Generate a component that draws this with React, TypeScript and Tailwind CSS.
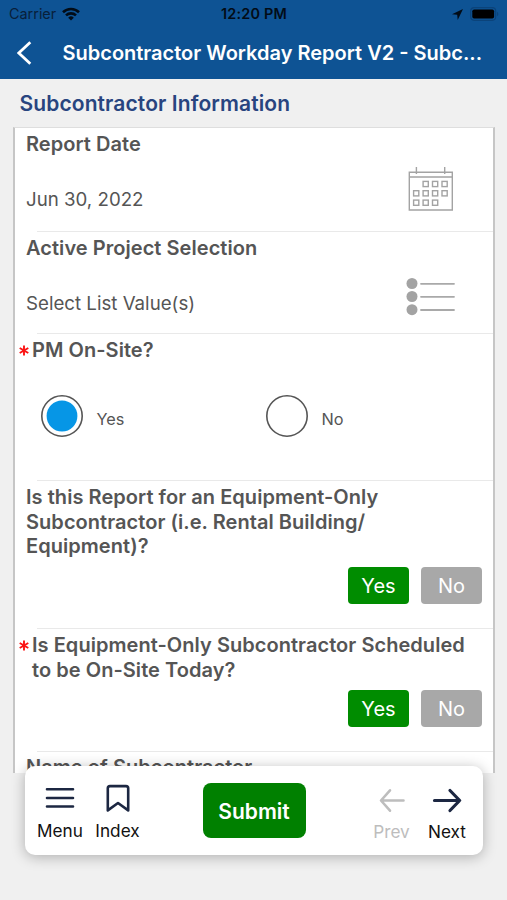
import { useState } from "react";
import type { ReactNode } from "react";

type FieldProps = {
  label: ReactNode;
  required?: boolean;
  className: string;
  children?: ReactNode;
};

function Field({ label, required, className, children }: FieldProps) {
  return (
    <div className={`flex flex-col ${className}`}>
      <div className={`flex ${required ? "pt-1 pl-1" : "pt-[4px] pl-[11px]"}`}>
        {required && <Asterisk />}
        <div className="text-[20px] leading-[24.5px] font-semibold tracking-[0.05px] whitespace-nowrap">{label}</div>
      </div>
      {children}
      <div className="mt-auto ml-[22px] h-px shrink-0 bg-[#e9e9e9]" />
    </div>
  );
}

function Asterisk() {
  return (
    <svg className="mt-[7px] mr-[3px] h-[11px] w-[10px] shrink-0" viewBox="0 0 10 11" fill="none" stroke="#fb1414" strokeWidth="1.9">
      <path d="M5 .5v10M.7 3l8.6 5M9.3 3l-8.6 5" />
    </svg>
  );
}

function YesNo() {
  const [value, setValue] = useState(true);

  return (
    <div className="flex justify-end gap-3 pr-[11px] text-[20px] leading-[38px] text-white">
      <button onClick={() => setValue(true)} className={`h-[37px] w-[61px] rounded ${value ? "bg-[#008c00]" : "bg-[#a8a8a8]"}`}>
        Yes
      </button>
      <button onClick={() => setValue(false)} className={`h-[37px] w-[61px] rounded ${value ? "bg-[#a8a8a8]" : "bg-[#008c00]"}`}>
        No
      </button>
    </div>
  );
}

function Radio({ label, checked, onClick }: { label: string; checked: boolean; onClick: () => void }) {
  return (
    <button onClick={onClick} className="flex w-[225px] items-center gap-[13.5px]">
      <svg className="size-[42px]" viewBox="0 0 42 42">
        <circle cx="21" cy="21" r="20.2" fill="none" stroke="#555" strokeWidth="1.6" />
        {checked && <circle cx="21" cy="21" r="15.4" fill="#0696e6" />}
      </svg>
      <span className="pt-[6px] text-[16.3px] leading-5">{label}</span>
    </button>
  );
}

const calendarCells = [
  [17.7, 18], [27.1, 18], [36.6, 18],
  [8.2, 27.3], [17.7, 27.3], [27.1, 27.3], [36.6, 27.3],
  [8.2, 36.7], [17.7, 36.7], [27.1, 36.7],
];

function CalendarIcon() {
  return (
    <svg className="size-[46px]" viewBox="0 0 46 46" fill="none" stroke="#a3a3a3" strokeWidth="1.4">
      <path d="M1.3 6.3h43v37.7h-43zM1.3 11h43M8.4 1v7M36.7 1v7" />
      {calendarCells.map(([x, y]) => (
        <rect key={`${x}-${y}`} x={x - 2.6} y={y - 2.6} width="5.2" height="5.2" />
      ))}
    </svg>
  );
}

function ListIcon() {
  return (
    <svg className="h-[38px] w-[49px]" viewBox="0 0 49 38">
      {[5.5, 18.5, 31.7].map((y) => (
        <g key={y}>
          <circle cx="6" cy={y} r="5.5" fill="#a3a3a3" />
          <path d={`M15 ${y + 0.3}h33`} stroke="#a9a9a9" strokeWidth="1.8" strokeLinecap="round" />
        </g>
      ))}
    </svg>
  );
}

function StatusBar() {
  return (
    <div className="grid h-7 grid-cols-3 items-center pr-2 pl-[9px] text-[#08203a]">
      <div className="flex items-center gap-[6px] text-[14.4px]">
        Carrier
        <svg className="h-[14px] w-[18px]" viewBox="0 0 18 14" fill="none" stroke="#020c17" strokeWidth="2.6">
          <path d="M1 5.2a11.6 11.6 0 0 1 16 0M4 8.4a7.3 7.3 0 0 1 10 0" />
          <path d="M9 13.5 6.2 10.7a4 4 0 0 1 5.6 0z" fill="#020c17" stroke="none" />
        </svg>
      </div>
      <div className="text-center text-[14.4px] font-semibold tracking-[0.2px] text-[#020c17]">12:20 PM</div>
      <div className="flex items-center justify-end gap-[7px]">
        <svg className="size-[11px]" viewBox="0 0 11 11" fill="#020c17">
          <path d="M11 0 0 5.3l5.2.5.5 5.2z" />
        </svg>
        <svg className="h-[14px] w-[29px]" viewBox="0 0 29 14">
          <rect x=".7" y=".7" width="25" height="12.6" rx="3.5" fill="none" stroke="#0b437a" strokeWidth="1.2" />
          <rect x="2.3" y="2.4" width="21.8" height="9.2" rx="1.8" fill="#000" />
          <path d="M27 4.8c1.8.8 1.8 3.6 0 4.4z" fill="#0b437a" />
        </svg>
      </div>
    </div>
  );
}

export default function App() {
  const [onSite, setOnSite] = useState("Yes");

  return (
    <div className="relative h-[900px] w-[507px] overflow-hidden bg-[#f0f0f0] font-[Inter,sans-serif] text-[#555]">
      <header className="h-[79px] bg-[#0e5394]">
        <StatusBar />
        <div className="flex h-[50px] items-center pl-[17px] text-white">
          <svg className="-mt-px h-6 w-[15px]" viewBox="0 0 15 24" fill="none" stroke="currentColor" strokeWidth="2.8">
            <path d="M13.3 1.3 1.8 12l11.5 10.7" />
          </svg>
          <h1 className="ml-[30.5px] text-[20px] font-semibold whitespace-nowrap">Subcontractor Workday Report V2 - Subc...</h1>
        </div>
      </header>

      <h2 className="h-12 pl-[19.5px] text-[21px] leading-[50px] font-semibold tracking-[0.1px] text-[#28447f]">Subcontractor Information</h2>

      <main className="mr-3 ml-[13px] h-[646px] overflow-hidden border-x-2 border-t border-x-[#c6c6c6] border-t-[#dedede] bg-white">
        <Field label="Report Date" className="h-[104px]">
          <div className="flex items-start justify-between pr-[39px] pl-[11px]">
            <span className="pt-[31.5px] text-[18.7px] leading-6">Jun 30, 2022</span>
            <span className="pt-[9.5px]"><CalendarIcon /></span>
          </div>
        </Field>
        <Field label="Active Project Selection" className="h-[102px]">
          <div className="flex items-start justify-between pr-[38px] pl-[11px]">
            <span className="pt-[31.5px] text-[18.7px] leading-6">Select List Value(s)</span>
            <span className="pt-[17px]"><ListIcon /></span>
          </div>
        </Field>
        <Field label="PM On-Site?" required className="h-[147px]">
          <div className="flex pt-[32px] pl-[26px]">
            <Radio label="Yes" checked={onSite === "Yes"} onClick={() => setOnSite("Yes")} />
            <Radio label="No" checked={onSite === "No"} onClick={() => setOnSite("No")} />
          </div>
        </Field>
        <Field
          label={<>Is this Report for an Equipment-Only<br />Subcontractor (i.e. Rental Building/<br />Equipment)?</>}
          className="h-[148px]"
        >
          <div className="pt-[8.5px]"><YesNo /></div>
        </Field>
        <Field
          label={<>Is Equipment-Only Subcontractor Scheduled<br />to be On-Site Today?</>}
          required
          className="h-[123px]"
        >
          <div className="pt-[8px]"><YesNo /></div>
        </Field>
        <Field label="Name of Subcontractor" className="-mt-px h-[104px]" />
      </main>

      {/* Floating toolbar over the form */}
      <nav className="absolute top-[766px] left-[25px] flex h-[89px] w-[458px] items-center rounded-[10px] bg-white pr-[16px] pl-[11px] text-[17.2px] leading-6 text-[#111] shadow-[0_2px_14px_rgba(0,0,0,0.28)]">
        <button className="flex w-12 flex-col items-center gap-[7px] pt-1">
          <svg className="h-[30px] w-[30px]" viewBox="0 0 30 30" stroke="#1c2742" strokeWidth="2.6" strokeLinecap="round">
            <path d="M2 7.3h26M2 16h26M2 24.5h26" />
          </svg>
          Menu
        </button>
        <button className="ml-[9.5px] flex w-12 flex-col items-center gap-[7px] pt-1">
          <svg className="h-[30px] w-6" viewBox="0 0 24 30" fill="none" stroke="#1c2742" strokeWidth="2.6" strokeLinejoin="round">
            <path d="M1.8 28.4V6.3a2.2 2.2 0 0 1 2.2-2.2h16a2.2 2.2 0 0 1 2.2 2.2v22.100L12 21z" />
          </svg>
          Index
        </button>
        <button className="ml-[61px] h-[55px] w-[103px] rounded-lg bg-[#008000] pt-0.5 text-[21px] font-semibold text-white">Submit</button>
        <button className="ml-auto flex w-10 flex-col items-center gap-[7px] pt-[5px] text-[#bdbdbd]">
          <svg className="h-[30px] w-[26px]" viewBox="0 0 26 30" fill="none" stroke="currentColor" strokeWidth="2.6" strokeLinecap="round" strokeLinejoin="round">
            <path d="M24.5 17.5h-22M11 7.3l-9 10.2 9 10.2" />
          </svg>
          Prev
        </button>
        <button className="ml-[15.5px] flex w-10 flex-col items-center gap-[7px] pt-[5px]">
          <svg className="h-[30px] w-[30px]" viewBox="0 0 30 30" fill="none" stroke="#1c2742" strokeWidth="3.2" strokeLinecap="round" strokeLinejoin="round">
            <path d="M2.5 17.5h25M18 7.5l9.7 10L18 27.5" />
          </svg>
          Next
        </button>
      </nav>
    </div>
  );
}
